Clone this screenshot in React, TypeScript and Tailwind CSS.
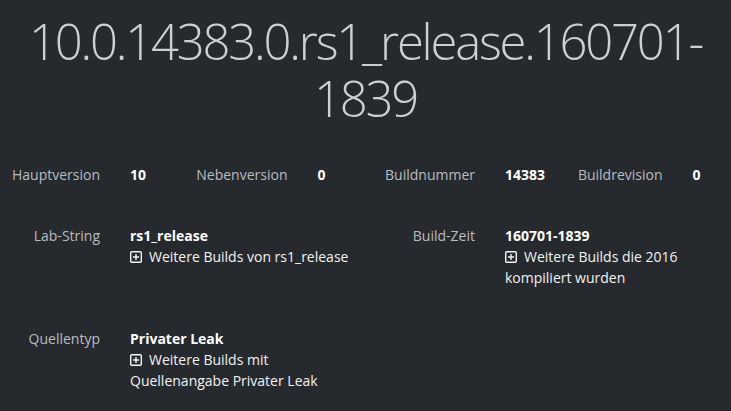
import type { ReactNode } from "react";

/* Small boxed plus used in front of the "more builds" links */
function PlusBox() {
  return (
    <svg
      viewBox="0 0 12 12"
      className="mr-[7px] inline-block h-[12px] w-[12px] align-[-1px]"
      fill="none"
      stroke="currentColor"
      strokeWidth="1.4"
    >
      <rect x="0.7" y="0.7" width="10.6" height="10.6" rx="1" />
      <path d="M6 3v6M3 6h6" />
    </svg>
  );
}

function Pair({
  label,
  children,
  wide = false,
}: {
  label: string;
  children: ReactNode;
  wide?: boolean;
}) {
  return (
    <div className={`flex shrink-0 ${wide ? "w-[375px]" : "w-[187.5px]"}`}>
      <div className="w-[100px] shrink-0 text-right text-[#b8bcc1]">{label}</div>
      <div className={`ml-[30px] shrink-0 ${wide ? "w-[232px]" : "w-[57px]"}`}>{children}</div>
    </div>
  );
}

function MoreLink({ children }: { children: ReactNode }) {
  return (
    <div className="text-[#f2f2f2]">
      <PlusBox />
      {children}
    </div>
  );
}

export default function App() {
  return (
    <div className="min-h-[411px] w-full overflow-hidden bg-[#26292e] pb-6 font-['Open_Sans',sans-serif] text-[14px] leading-[21px]">
      {/* Title */}
      <h1 className="px-2 pt-[13px] text-center text-[49px] font-light leading-[57px] tracking-[-2.2px] text-[#cdcfd2]">
        10.0.14383.0.rs1_release.160701-1839
      </h1>

      {/* Version numbers */}
      <div className="mt-[37px] flex">
        <Pair label="Hauptversion">
          <span className="font-bold text-white">10</span>
        </Pair>
        <Pair label="Nebenversion">
          <span className="font-bold text-white">0</span>
        </Pair>
        <Pair label="Buildnummer">
          <span className="font-bold text-white">14383</span>
        </Pair>
        <Pair label="Buildrevision">
          <span className="font-bold text-white">0</span>
        </Pair>
      </div>

      {/* Lab string + build time */}
      <div className="mt-10 flex">
        <Pair label="Lab-String" wide>
          <div className="font-bold text-white">rs1_release</div>
          <MoreLink>Weitere Builds von rs1_release</MoreLink>
        </Pair>
        <Pair label="Build-Zeit" wide>
          <div className="font-bold text-white">160701-1839</div>
          <MoreLink>Weitere Builds die 2016 kompiliert wurden</MoreLink>
        </Pair>
      </div>

      {/* Source type */}
      <div className="mt-10 flex">
        <Pair label="Quellentyp" wide>
          <div className="font-bold text-white">Privater Leak</div>
          <MoreLink>Weitere Builds mit Quellenangabe Privater Leak</MoreLink>
        </Pair>
      </div>
    </div>
  );
}
